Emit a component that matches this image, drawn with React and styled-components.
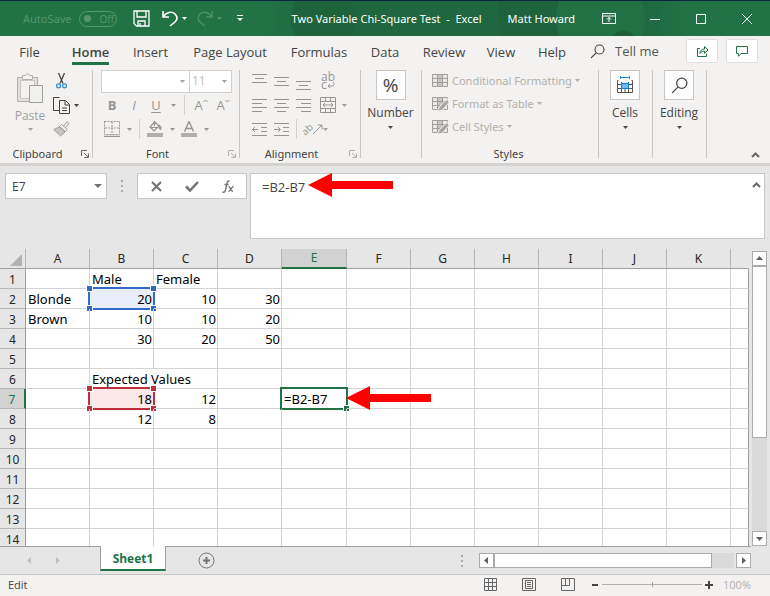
import React, { useState } from "react";
import styled, { createGlobalStyle } from "styled-components";

const GlobalStyle = createGlobalStyle`
  * {
    box-sizing: border-box;
  }

  body {
    margin: 0;
    background: #e6e6e6;
  }

  button,
  input,
  select,
  textarea {
    font: inherit;
    color: inherit;
    margin: 0;
    outline: none;
  }
`;

const Window = styled.div`
  display: flex;
  flex-direction: column;
  height: 100vh;
  overflow: hidden;
  background: #e6e6e6;
  color: #444;
  font-family: "Open Sans", "Noto Sans", sans-serif;
  font-size: 12px;
  line-height: 16px;
`;

const PlainButton = styled.button`
  display: flex;
  align-items: center;
  justify-content: center;
  padding: 0;
  border: none;
  background: none;
`;

/* ---------- title bar ---------- */

const TitleBar = styled.header`
  display: flex;
  align-items: center;
  flex: none;
  height: 36px;
  padding-left: 23px;
  border-top: 1px solid #0a2444;
  color: #fff;
  font-family: "Noto Sans", sans-serif;
  font-size: 11px;
  background:
    radial-gradient(circle at 81% 120%, #1b6039 12px, transparent 13px),
    radial-gradient(circle at 78% 50%, #227145 44px, transparent 45px),
    radial-gradient(circle at 42% 50%, #1d633c 32px, transparent 33px),
    radial-gradient(circle at 73% 30%, #1d633b 64px, transparent 65px),
    linear-gradient(90deg, #217346 34%, #1e673f 42%, #1e673f 82%, #217346 90%);
`;

const AutoSave = styled.label`
  display: flex;
  align-items: center;
  gap: 8px;
  color: #55966f;
`;

const Toggle = styled.span`
  display: flex;
  align-items: center;
  gap: 8px;
  width: 38px;
  height: 16px;
  padding-left: 4px;
  border: 1px solid #55966f;
  border-radius: 8px;
  font-size: 10px;

  input {
    appearance: none;
    width: 7px;
    height: 7px;
    border-radius: 50%;
    background: #55966f;
  }
`;

const QuickAccess = styled.div`
  display: flex;
  align-items: center;
  margin-left: 10px;
`;

const QuickButton = styled(PlainButton)`
  width: ${({ $width }) => $width}px;
  height: 24px;
  color: ${({ disabled }) => (disabled ? "#4a8e66" : "#fff")};
`;

const QuickMenuButton = styled(QuickButton)`
  justify-content: flex-end;
  padding-right: 4px;
`;

const DocTitle = styled.div`
  display: flex;
  flex: 1;
  justify-content: flex-end;
  gap: 26px;
  white-space: pre;
`;

const WindowButtons = styled.div`
  display: flex;
  margin-left: 11px;
`;

const WindowButton = styled(PlainButton)`
  width: 46px;
  height: 34px;
`;

/* ---------- ribbon ---------- */

const TabRow = styled.nav`
  display: flex;
  align-items: center;
  flex: none;
  height: 30px;
  padding-right: 12px;
  background: #f3f2f1;
  font-size: 13px;
`;

const RibbonTab = styled(PlainButton)`
  width: ${({ $width }) => $width}px;
  height: 30px;
  white-space: nowrap;

  span {
    height: 28px;
    padding-top: 7px;
    border-bottom: 3px solid ${({ $active }) => ($active ? "#217346" : "transparent")};
    font-weight: ${({ $active }) => ($active ? 600 : 400)};
  }
`;

const TellMe = styled.label`
  display: flex;
  align-items: center;
  flex: 1;
  gap: 10px;
  padding-left: 13px;

  input {
    width: 60px;
    padding: 0;
    border: none;
    background: none;
  }

  input::placeholder {
    color: #555;
    opacity: 1;
  }
`;

const ShareButtons = styled.div`
  display: flex;
  gap: 8px;
`;

const ShareButton = styled(PlainButton)`
  width: 32px;
  height: 24px;
  border: 1px solid #e1dfdd;
  border-radius: 2px;
  background: #fff;
  color: #217346;
`;

const Ribbon = styled.section`
  display: flex;
  flex: none;
  height: 100px;
  padding-top: 4px;
  border-bottom: 3px solid #d4d3d2;
  background: #f3f2f1;
`;

const Group = styled.div`
  display: flex;
  flex-direction: column;
  width: ${({ $width }) => $width}px;
  height: 88px;
  border-right: 1px solid #c8c6c4;
`;

const GroupBody = styled.div`
  display: flex;
  flex: 1;
  flex-direction: ${({ $column }) => ($column ? "column" : "row")};
  margin-top: -1px;
  padding-left: ${({ $pad = 0 }) => $pad}px;
`;

const GroupLabel = styled.div`
  display: flex;
  align-items: center;
  height: 16px;
  margin-bottom: -4px;
  padding-right: 3px;
  font-family: "Noto Sans", sans-serif;
  font-size: 11px;

  span {
    flex: 1;
    text-align: center;
  }

  svg {
    margin-left: 6px;
  }
`;

const ToolRow = styled.div`
  display: flex;
  align-items: center;
  height: 24px;
  color: #a19f9d;
`;

const Tool = styled(PlainButton)`
  width: ${({ $width = 22 }) => $width}px;
  height: 22px;
  color: ${({ $on }) => ($on ? "#444" : "#979593")};
  font-size: 13px;
  font-weight: ${({ $bold }) => ($bold ? 700 : 400)};
  font-style: ${({ $italic }) => ($italic ? "italic" : "normal")};
  text-decoration: ${({ $underline }) => ($underline ? "underline" : "none")};
  text-underline-offset: 2px;
`;

const Divider = styled.span`
  width: 1px;
  height: 20px;
  margin: 0 ${({ $gap = 6 }) => $gap}px;
  background: #d2d0ce;
`;

const PasteButton = styled(PlainButton)`
  flex-direction: column;
  justify-content: flex-start;
  width: 36px;
  gap: 4px;
  padding-top: 4px;
  color: #a19f9d;
`;

const ToolColumn = styled.div`
  display: flex;
  flex-direction: column;
`;

const ComboWrap = styled.span`
  display: grid;
  align-items: center;
  width: ${({ $width }) => $width}px;
  height: 23px;
  border: 1px solid #d2d0ce;
  background: #fff;

  & + & {
    margin-left: -1px;
  }

  select,
  svg {
    grid-area: 1 / 1;
  }

  svg {
    justify-self: end;
    margin-right: 4px;
    pointer-events: none;
  }

  select {
    appearance: none;
    width: 100%;
    padding: 0 2px;
    border: none;
    background: none;
  }
`;

const StyleButton = styled(PlainButton)`
  justify-content: flex-start;
  height: 23px;
  gap: 3px;
  color: #b1b0ae;
  font-family: "Noto Sans", sans-serif;
  font-size: 11px;
  white-space: nowrap;
`;

const BigButton = styled(PlainButton)`
  flex: 1;
  flex-direction: column;
  justify-content: flex-start;
  gap: 5px;
  padding: 1px 1px 0 0;
`;

const BigIcon = styled.span`
  display: flex;
  align-items: center;
  justify-content: center;
  width: 30px;
  height: 30px;
  border: 1px solid #c8c6c4;
  background: #fdfdfd;
  font-size: 19px;
`;

const CollapseButton = styled(PlainButton)`
  align-self: flex-end;
  width: 20px;
  height: 16px;
  margin: 0 5px 0 auto;
`;

/* ---------- formula bar ---------- */

const FormulaBar = styled.section`
  display: flex;
  align-items: flex-start;
  flex: none;
  padding: 7px 5px 10px;
`;

const NameBox = styled.div`
  display: flex;
  align-items: center;
  width: 102px;
  height: 26px;
  border: 1px solid #c6c6c6;
  background: #fff;

  input {
    flex: 1;
    min-width: 0;
    padding: 2px 0 0 6px;
    border: none;
    background: none;
  }
`;

const BarDots = styled.span`
  display: flex;
  justify-content: center;
  width: ${({ $width }) => $width}px;
  padding: ${({ $top = 0 }) => $top}px 0 0;
  margin-left: ${({ $end }) => ($end ? "auto" : 0)};
`;

const FormulaButtons = styled.div`
  display: flex;
  width: 110px;
  height: 26px;
  margin-right: 3px;
  border: 1px solid #c6c6c6;
  background: #fff;
`;

const FormulaButton = styled(PlainButton)`
  flex: 1;
  color: #737373;
`;

const FormulaField = styled.div`
  position: relative;
  display: flex;
  align-items: flex-start;
  flex: 1;
  height: 66px;
  border: 1px solid #c6c6c6;
  background: #fff;

  textarea {
    flex: 1;
    height: 60px;
    padding: 5px 0 0 11px;
    border: none;
    background: none;
    font-size: 13px;
    resize: none;
  }
`;

const ExpandButton = styled(PlainButton)`
  width: 16px;
  height: 22px;
`;

const FormulaArrow = styled.span`
  position: absolute;
  top: -1px;
  left: 57px;
  display: flex;
`;

/* ---------- sheet ---------- */

const SheetArea = styled.main`
  display: flex;
  flex: 1;
  min-height: 0;
`;

const GridPane = styled.div`
  flex: 1;
  min-width: 0;
  overflow: hidden;
`;

const Grid = styled.table`
  width: 100%;
  table-layout: fixed;
  border-collapse: separate;
  border-spacing: 0;
  background: #fff;
  color: #000;
  font-family: "Noto Sans", sans-serif;
  font-size: 13px;
`;

const ColHead = styled.th`
  width: ${({ $width }) => ($width ? `${$width}px` : "auto")};
  height: 20px;
  padding: 0;
  border-right: 1px solid #b5b5b5;
  border-bottom: ${({ $active }) => ($active ? "2px solid #217346" : "1px solid #9f9f9f")};
  background: ${({ $active }) => ($active ? "#d2d2d2" : "#e6e6e6")};
  color: ${({ $active }) => ($active ? "#217346" : "#262626")};
  font-size: 12px;
  font-weight: 400;
  line-height: 18px;

  &:last-child {
    border-right-color: #e6e6e6;
  }
`;

const Corner = styled(ColHead)`
  svg {
    display: block;
    margin: 2px 3px 0 auto;
  }
`;

const RowHead = styled.th`
  height: 20px;
  padding: 0;
  border-right: ${({ $active }) => ($active ? "2px solid #217346" : "1px solid #9f9f9f")};
  border-bottom: 1px solid #b5b5b5;
  background: ${({ $active }) => ($active ? "#d2d2d2" : "#e6e6e6")};
  color: ${({ $active }) => ($active ? "#217346" : "#262626")};
  font-size: 12px;
  font-weight: 400;
`;

const Cell = styled.td`
  position: relative;
  height: 20px;
  padding: 0 1px 0 2px;
  border-right: 1px solid #d4d4d4;
  border-bottom: 1px solid #d4d4d4;
  text-align: ${({ $number }) => ($number ? "right" : "left")};
  white-space: nowrap;

  &:last-child {
    border-right-color: #9f9f9f;
  }
`;

const RangeMark = styled.span`
  position: absolute;
  inset: -2px;
  border: 2px solid ${({ $color }) => $color};
  background: ${({ $fill }) => $fill};
`;

const Handle = styled.i`
  position: absolute;
  width: 5px;
  height: 5px;
  background: ${({ $color }) => $color};
  outline: 1px solid #fff;
  ${({ $v }) => $v}: -3px;
  ${({ $h }) => $h}: -3px;
`;

const CellText = styled.span`
  position: relative;
  display: block;
  height: 19px;
  line-height: 21px;
`;

const CellArrow = styled.span`
  position: absolute;
  top: -3px;
  left: 100%;
  z-index: 2;
  display: flex;
`;

const VScroll = styled.div`
  display: flex;
  flex-direction: column;
  flex: none;
  width: 21px;
  padding: 2px 3px 0;
`;

const ScrollButton = styled(PlainButton)`
  flex: none;
  width: 15px;
  height: 15px;
  border: 1px solid #ababab;
  background: #fff;
`;

const VTrack = styled.div`
  flex: 1;
  width: 15px;
  background: #dadada;
`;

const Thumb = styled.div`
  border: 1px solid #ababab;
  background: #fff;
`;

/* ---------- sheet tabs and status bar ---------- */

const SheetBar = styled.footer`
  display: flex;
  flex: none;
  height: 29px;
  padding-right: 19px;
  border-bottom: 1px solid #c6c6c6;
`;

const SheetNav = styled.div`
  display: flex;
  align-items: center;
  justify-content: center;
  gap: 20px;
  width: 100px;
  padding-right: 12px;
  border-top: 1px solid #9f9f9f;
`;

const SheetTab = styled(PlainButton)`
  width: 66px;
  height: 25px;
  padding-top: 3px;
  border: 1px solid #9f9f9f;
  border-top: none;
  border-bottom: 2px solid #217346;
  background: #fff;
  color: #217346;
  font-weight: 700;
`;

const SheetRest = styled.div`
  display: flex;
  align-items: center;
  flex: 1;
  padding-left: 32px;
  border-top: 1px solid #9f9f9f;
`;

const HScroll = styled.div`
  display: flex;
  width: 272px;
`;

const HTrack = styled.div`
  display: flex;
  flex: 1;
  margin-right: 2px;
  background: #dadada;
`;

const StatusBar = styled.div`
  display: flex;
  align-items: center;
  flex: none;
  height: 21px;
  padding: 0 19px 2px 8px;
  background: #f3f2f1;
  font-size: 11px;

  > span:first-child {
    flex: 1;
  }
`;

const ViewButtons = styled.div`
  display: flex;
  gap: 25px;
  margin-right: 16px;
`;

const ZoomSlider = styled.input`
  appearance: none;
  width: 100px;
  height: 9px;
  margin: 0 3px;
  background: linear-gradient(#b1b0ae, #b1b0ae) center / 100% 1px no-repeat;

  &::-webkit-slider-thumb {
    appearance: none;
    width: 1px;
    height: 5px;
    background: #a19f9d;
  }
`;

const ZoomLevel = styled.span`
  width: 38px;
  color: #b1b0ae;
  text-align: right;
`;

/* ---------- icons ---------- */

const Icon = ({ w = 16, h = 16, children, ...rest }) => (
  <svg
    width={w}
    height={h}
    viewBox={`0 0 ${w} ${h}`}
    fill="none"
    stroke="currentColor"
    aria-hidden="true"
    {...rest}
  >
    {children}
  </svg>
);

const Caret = ({ color = "currentColor" }) => (
  <Icon w={5} h={3} stroke="none">
    <path d="M0 0h5L2.5 3z" fill={color} />
  </Icon>
);

const Triangle = ({ d, color = "#606060" }) => (
  <Icon w={9} h={9} stroke="none">
    <path d={d} fill={color} />
  </Icon>
);

const Chevron = () => (
  <Icon w={9} h={6} strokeWidth="2" stroke="#666">
    <path d="M1 5l3.5-3.5L8 5" />
  </Icon>
);

const Dots = () => (
  <Icon w={3} h={12} stroke="none">
    <path d="M0 0h2v2H0zM0 5h2v2H0zM0 10h2v2H0z" fill="#ababab" />
  </Icon>
);

const RedArrow = () => (
  <Icon w={85} h={24} stroke="none">
    <path d="M0 12L24 0v8h61v8H24v8z" fill="#fe0000" />
  </Icon>
);

const Launcher = ({ on }) => (
  <Icon w={8} h={8} stroke={on ? "#666" : "#b1b0ae"}>
    <path d="M.5 6V.5H6M3 3l4 4M7.5 3.5v4h-4" />
  </Icon>
);

const SaveIcon = () => (
  <Icon w={17} h={17} strokeWidth="1.3">
    <path d="M1 1h15v15H3.5L1 13.5zM4 1v6h9V1M5 16v-5h7v5M7 16v-3" />
  </Icon>
);

const UndoIcon = ({ flip }) => (
  <Icon w={16} h={17} strokeWidth="1.6">
    <path
      d={
        flip
          ? "M15 1v6H9M15 7C12 2 6 1 3 4s-2 6 0 8l5 4"
          : "M1 1v6h6M1 7c3-5 9-6 12-3s2 6 0 8l-5 4"
      }
    />
  </Icon>
);

const CustomizeIcon = () => (
  <Icon w={6} h={7} stroke="none">
    <path d="M0 0h6v1H0zM0 3h6L3 6z" fill="currentColor" />
  </Icon>
);

const RibbonModeIcon = () => (
  <Icon w={14} h={11}>
    <path d="M.5.5h13v10H.5zM.5 3h13M7 9V4.5M5 6.5l2-2 2 2" />
  </Icon>
);

const SearchIcon = ({ size = 15 }) => (
  <svg
    width={size}
    height={size}
    viewBox="0 0 15 15"
    fill="none"
    stroke="currentColor"
    strokeWidth="1.1"
    aria-hidden="true"
  >
    <circle cx="9.5" cy="5.5" r="4.5" />
    <path d="M6.3 8.7L1 14" />
  </svg>
);

const ShareIcon = () => (
  <Icon w={13} h={13}>
    <path d="M4 3.5H1.5v8h9V8.5M4 8.5c0-3 2-4.5 4.5-4.5V1.5L12 5 8.5 8.3V6C6.5 6 5 6.8 4 8.5z" />
  </Icon>
);

const CommentIcon = () => (
  <Icon w={12} h={11}>
    <path d="M.5.5h11v7H5l-2.5 2.8V7.5h-2z" />
  </Icon>
);

const PasteIcon = () => (
  <Icon w={28} h={31} stroke="#b1b0ae">
    <path d="M1.5 4.5h20v24h-20z" fill="#e1dfdd" />
    <path d="M4.5 7.5h14v18h-14z" fill="#f3f2f1" stroke="#c8c6c4" />
    <path d="M6.5 6.5v-4h3C10 0 13 0 13.5 2.5h3v4z" fill="#f3f2f1" />
    <path d="M13.5 12.5h13v17h-13z" fill="#f0f0ef" stroke="#a19f9d" />
  </Icon>
);

const CutIcon = () => (
  <Icon w={11} h={16}>
    <path d="M2.5 0L7 10.5M8.5 0L4 10.5" stroke="#444" strokeWidth="1.3" />
    <circle cx="2.5" cy="12.8" r="2" stroke="#2b88d8" strokeWidth="1.2" />
    <circle cx="8.5" cy="12.8" r="2" stroke="#2b88d8" strokeWidth="1.2" />
  </Icon>
);

const CopyIcon = () => (
  <Icon w={17} h={17}>
    <path d="M6.5 13.5h-6V.5h6M6.5 3.5h6l4 4v9h-10zM12 4v4h4.5M9 11h5M9 13.5h5" />
  </Icon>
);

const PainterIcon = () => (
  <Icon w={17} h={16} stroke="#a19f9d">
    <path d="M10.500 5L14 .8l2 1.700-3.500 4" fill="#f3f2f1" />
    <path d="M8.500 3.500l6 5-2 2-6-5z" fill="#f3f2f1" />
    <path d="M6 6L.8 8.500l6.700 6.500L12 11z" fill="#c8c6c4" />
  </Icon>
);

const GrowMark = ({ down }) => (
  <Icon w={5} h={12}>
    <path d={down ? "M.5 1l2 2 2-2" : "M.5 3l2-2 2 2"} />
  </Icon>
);

const BordersIcon = () => (
  <Icon w={16} h={16}>
    <path d="M.5.5h15v13H.5zM8 1v13M1 7h15" strokeDasharray="2 1" />
    <path d="M0 15.5h16" strokeWidth="1.5" />
  </Icon>
);

const FillIcon = () => (
  <Icon w={16} h={16}>
    <path d="M7.5 0v5M7.5 1L3 6l4 4 5-5-4-4M3 6.5h8" strokeWidth="1.2" />
    <path d="M12 4c2 1 2.5 3 1.5 5-1-1-1.5-3-1.5-5z" fill="currentColor" />
    <path d="M0 12h16v4H0z" fill="#b1aeab" stroke="none" />
  </Icon>
);

const FontColorIcon = () => (
  <Icon w={16} h={16}>
    <path d="M3.5 10.5L8 .5l4.5 10M5 7.5h6" strokeWidth="1.4" />
    <path d="M0 12h16v4H0z" fill="#b1aeab" stroke="none" />
  </Icon>
);

const LinesIcon = ({ rows }) => (
  <Icon w={15} h={17}>
    <path d={rows} />
  </Icon>
);

const MergeIcon = () => (
  <Icon w={16} h={16}>
    <path d="M.5.5h15v15H.5zM.5 4.5h15M.5 11.5h15M5.5.5v4M10.5.5v4M5.5 11.5v4M10.5 11.5v4M3 8h10M5 6L3 8l2 2M11 6l2 2-2 2" />
  </Icon>
);

const WrapText = styled.span`
  font-size: 12px;
  line-height: 8px;
  text-align: left;
  white-space: pre;
`;

const TiltText = styled.span`
  font-size: 10px;
  line-height: 10px;
  transform: rotate(-45deg);
`;

const TableIcon = ({ brush }) => (
  <Icon w={17} h={16} stroke="#a19f9d">
    <path d="M.5 1.5h15v12H.5z" fill="#eceae9" />
    <path d="M5.5 1.5h5v12h-5z" fill="#c8c6c4" />
    <path d="M.5 5.5h15M.5 9.5h15M5.5 1v13M10.5 1v13" />
    {brush && (
      <path
        d="M15.5 3L8 10l-3 5.5 5.5-1.5 6.5-7.500z"
        fill="#a9a7a5"
        stroke="#f3f2f1"
      />
    )}
  </Icon>
);

const CellsIcon = () => (
  <Icon w={18} h={18} stroke="#555">
    <path d="M2.5 4.5h-1v12h15v-12h-1M1.5 8.5h15M1.5 12.5h15M5.5 6v10.5M12.5 6v10.5M9 12.5v4" />
    <path d="M5.5 7.5h7v5h-7z" fill="#6cb8f0" stroke="#1480d8" />
    <path d="M4 1.5h10M4.5 0v3M13.5 0v3" stroke="#2b88d8" />
  </Icon>
);

const GridViewIcon = () => (
  <Icon w={13} h={13} stroke="#666">
    <path d="M.5.5h12v12H.5zM4.5.5v12M8.5.5v12M.5 4.5h12M.5 8.5h12" />
  </Icon>
);

const PageViewIcon = () => (
  <Icon w={14} h={13} stroke="#666">
    <path d="M.5.5h13v12H.5zM3.5 2.5h7v8h-7zM5 4.5h4M5 6.5h4M5 8.5h4" />
  </Icon>
);

const BreakViewIcon = () => (
  <Icon w={14} h={13} stroke="#666">
    <path d="M.5.5h13v12H.5zM.5 7.5h8v-7M4.5.5v7" />
  </Icon>
);

const PlusCircleIcon = () => (
  <Icon w={17} h={17} stroke="#737373">
    <circle cx="8.5" cy="8.5" r="7.5" />
    <path d="M8.5 5v7M5 8.5h7" strokeWidth="2" />
  </Icon>
);

/* ---------- data ---------- */

const tabs = [
  { name: "File", width: 59 },
  { name: "Home", width: 63 },
  { name: "Insert", width: 57 },
  { name: "Page Layout", width: 102 },
  { name: "Formulas", width: 76 },
  { name: "Data", width: 56 },
  { name: "Review", width: 62 },
  { name: "View", width: 52 },
  { name: "Help", width: 50 },
];

const alignTop = [
  ["Top Align", "M0 1.5h15M3 5.5h9M0 9.5h15"],
  ["Middle Align", "M0 4.5h15M3 8.5h9M0 12.5h15"],
  ["Bottom Align", "M0 8.5h15M3 12.5h9M0 16.5h15"],
];

const alignSide = [
  ["Align Left", "M0 2.5h15M0 6.5h10M0 10.5h15M0 14.5h10"],
  ["Center", "M0 2.5h15M3 6.5h9M0 10.5h15M3 14.5h9"],
  ["Align Right", "M0 2.5h15M5 6.5h10M0 10.5h15M5 14.5h10"],
];

const indents = [
  ["Decrease Indent", "M0 2.5h15M9 6.5h6M9 10.5h6M0 14.5h15M0 8.5h6M3 6L.5 8.5 3 11"],
  ["Increase Indent", "M0 2.5h15M9 6.5h6M9 10.5h6M0 14.5h15M0 8.5h6M4 6l2.5 2.5L4 11"],
];

const columns = ["A", "B", "C", "D", "E", "F", "G", "H", "I", "J", "K"];
const rowNumbers = Array.from({ length: 14 }, (_, i) => i + 1);

const values = {
  B1: "Male",
  C1: "Female",
  A2: "Blonde",
  B2: 20,
  C2: 10,
  D2: 30,
  A3: "Brown",
  B3: 10,
  C3: 10,
  D3: 20,
  B4: 30,
  C4: 20,
  D4: 50,
  B6: "Expected Values",
  B7: 18,
  C7: 12,
  B8: 12,
  C8: 8,
};

const ranges = {
  B2: { color: "#3169c6", fill: "#e8eef9" },
  B7: { color: "#be2f3c", fill: "#fbe9ea" },
};

const corners = [
  ["top", "left"],
  ["top", "right"],
  ["bottom", "left"],
  ["bottom", "right"],
];

const active = "E7";

const SheetCell = ({ id, formula }) => {
  const range = ranges[id];
  const isActive = id === active;
  const value = isActive ? formula : values[id];

  return (
    <Cell $number={typeof value === "number"} colSpan={id === "B6" ? 2 : 1}>
      {range && (
        <RangeMark $color={range.color} $fill={range.fill}>
          {corners.map(([v, h]) => (
            <Handle key={v + h} $v={v} $h={h} $color={range.color} />
          ))}
        </RangeMark>
      )}
      {isActive && (
        <RangeMark $color="#217346" $fill="#fff">
          <Handle $v="bottom" $h="right" $color="#217346" />
        </RangeMark>
      )}
      <CellText>{value}</CellText>
      {isActive && (
        <CellArrow>
          <RedArrow />
        </CellArrow>
      )}
    </Cell>
  );
};

const RibbonGroup = ({ label, width, pad, column, launcher, children }) => (
  <Group $width={width}>
    <GroupBody $column={column} $pad={pad}>
      {children}
    </GroupBody>
    {label && (
      <GroupLabel>
        <span>{label}</span>
        {launcher && <Launcher on={launcher === "on"} />}
      </GroupLabel>
    )}
  </Group>
);

const App = () => {
  const [tab, setTab] = useState("Home");
  const [formula, setFormula] = useState("=B2-B7");
  const [zoom, setZoom] = useState(100);

  return (
    <>
      <GlobalStyle />
      <Window>
        <TitleBar>
          <AutoSave>
            AutoSave
            <Toggle>
              <input type="checkbox" disabled />
              Off
            </Toggle>
          </AutoSave>
          <QuickAccess>
            <QuickButton $width={28} aria-label="Save">
              <SaveIcon />
            </QuickButton>
            <QuickMenuButton $width={27} aria-label="Undo">
              <UndoIcon />
            </QuickMenuButton>
            <Caret />
            <QuickMenuButton $width={30} aria-label="Redo" disabled>
              <UndoIcon flip />
            </QuickMenuButton>
            <Caret color="#55966f" />
            <QuickButton $width={36} aria-label="Customize Quick Access Toolbar">
              <CustomizeIcon />
            </QuickButton>
          </QuickAccess>
          <DocTitle>
            <span>{"Two Variable Chi-Square Test  -  Excel"}</span>
            <span>Matt Howard</span>
          </DocTitle>
          <WindowButtons>
            <WindowButton aria-label="Ribbon Display Options">
              <RibbonModeIcon />
            </WindowButton>
            <WindowButton aria-label="Minimize">
              <Icon w={10} h={10}>
                <path d="M0 5.5h10" />
              </Icon>
            </WindowButton>
            <WindowButton aria-label="Maximize">
              <Icon w={10} h={10}>
                <path d="M.5.5h9v9h-9z" />
              </Icon>
            </WindowButton>
            <WindowButton aria-label="Close">
              <Icon w={10} h={10}>
                <path d="M0 0l10 10M10 0L0 10" />
              </Icon>
            </WindowButton>
          </WindowButtons>
        </TitleBar>

        <TabRow>
          {tabs.map(({ name, width }) => (
            <RibbonTab
              key={name}
              $width={width}
              $active={tab === name}
              onClick={() => setTab(name)}
            >
              <span>{name}</span>
            </RibbonTab>
          ))}
          <TellMe>
            <SearchIcon />
            <input type="text" placeholder="Tell me" aria-label="Tell me" />
          </TellMe>
          <ShareButtons>
            <ShareButton aria-label="Share">
              <ShareIcon />
            </ShareButton>
            <ShareButton aria-label="Comments">
              <CommentIcon />
            </ShareButton>
          </ShareButtons>
        </TabRow>

        <Ribbon>
          <RibbonGroup label="Clipboard" width={93} pad={12} launcher="on">
            <PasteButton disabled>
              <PasteIcon />
              Paste
              <Caret />
            </PasteButton>
            <ToolColumn>
              <ToolRow>
                <Tool $width={26} $on aria-label="Cut">
                  <CutIcon />
                </Tool>
              </ToolRow>
              <ToolRow>
                <Tool $width={26} $on aria-label="Copy">
                  <CopyIcon />
                </Tool>
                <Caret color="#444" />
              </ToolRow>
              <ToolRow>
                <Tool $width={26} aria-label="Format Painter">
                  <PainterIcon />
                </Tool>
              </ToolRow>
            </ToolColumn>
          </RibbonGroup>

          <RibbonGroup label="Font" width={147} pad={8} column launcher="off">
            <ToolRow>
              <ComboWrap $width={89}>
                <select aria-label="Font" disabled>
                  <option></option>
                </select>
                <Caret />
              </ComboWrap>
              <ComboWrap $width={43}>
                <select aria-label="Font Size" disabled>
                  <option>11</option>
                </select>
                <Caret />
              </ComboWrap>
            </ToolRow>
            <ToolRow>
              <Tool $bold>B</Tool>
              <Tool $italic>I</Tool>
              <Tool $underline>U</Tool>
              <Tool $width={12} aria-label="Underline style">
                <Caret />
              </Tool>
              <Divider $gap={5} />
              <Tool aria-label="Increase Font Size">
                A<GrowMark />
              </Tool>
              <Tool aria-label="Decrease Font Size">
                A<GrowMark down />
              </Tool>
            </ToolRow>
            <ToolRow>
              <Tool aria-label="Borders">
                <BordersIcon />
              </Tool>
              <Tool $width={12} aria-label="Border style">
                <Caret />
              </Tool>
              <Divider $gap={4} />
              <Tool aria-label="Fill Color">
                <FillIcon />
              </Tool>
              <Tool $width={12} aria-label="Fill options">
                <Caret />
              </Tool>
              <Tool aria-label="Font Color">
                <FontColorIcon />
              </Tool>
              <Tool $width={12} aria-label="Font color options">
                <Caret />
              </Tool>
            </ToolRow>
          </RibbonGroup>

          <RibbonGroup label="Alignment" width={121} pad={8} column launcher="off">
            <ToolRow>
              {alignTop.map(([label, rows]) => (
                <Tool key={label} aria-label={label}>
                  <LinesIcon rows={rows} />
                </Tool>
              ))}
              <Tool $width={28} aria-label="Wrap Text">
                <WrapText>
                  {"ab\nc"}
                  <Icon w={8} h={7}>
                    <path d="M3 2L1 4l2 2M1 4h4c2 0 2.5-2 1.5-4" />
                  </Icon>
                </WrapText>
              </Tool>
            </ToolRow>
            <ToolRow>
              {alignSide.map(([label, rows]) => (
                <Tool key={label} aria-label={label}>
                  <LinesIcon rows={rows} />
                </Tool>
              ))}
              <Tool $width={28} aria-label="Merge">
                <MergeIcon />
              </Tool>
              <Caret />
            </ToolRow>
            <ToolRow>
              {indents.map(([label, rows]) => (
                <Tool key={label} aria-label={label}>
                  <LinesIcon rows={rows} />
                </Tool>
              ))}
              <Divider $gap={4} />
              <Tool aria-label="Orientation">
                <TiltText>ab</TiltText>
                <Icon w={10} h={12}>
                  <path d="M0 11l9-9M4.5 2H9v4.5" />
                </Icon>
              </Tool>
              <Caret />
            </ToolRow>
          </RibbonGroup>

          <RibbonGroup width={61}>
            <BigButton>
              <BigIcon>%</BigIcon>
              Number
              <Caret color="#444" />
            </BigButton>
          </RibbonGroup>

          <RibbonGroup label="Styles" width={177} pad={10} column>
            <StyleButton disabled>
              <TableIcon />
              Conditional Formatting
              <Caret />
            </StyleButton>
            <StyleButton disabled>
              <TableIcon brush />
              Format as Table
              <Caret />
            </StyleButton>
            <StyleButton disabled>
              <TableIcon brush />
              Cell Styles
              <Caret />
            </StyleButton>
          </RibbonGroup>

          <RibbonGroup width={54}>
            <BigButton>
              <BigIcon>
                <CellsIcon />
              </BigIcon>
              Cells
              <Caret color="#444" />
            </BigButton>
          </RibbonGroup>

          <RibbonGroup width={54}>
            <BigButton>
              <BigIcon>
                <SearchIcon size={17} />
              </BigIcon>
              Editing
              <Caret color="#444" />
            </BigButton>
          </RibbonGroup>

          <CollapseButton aria-label="Collapse the Ribbon">
            <Chevron />
          </CollapseButton>
        </Ribbon>

        <FormulaBar>
          <NameBox>
            <input type="text" aria-label="Name Box" defaultValue={active} />
            <ExpandButton aria-label="Open names">
              <Triangle d="M0 2h8L4 6z" color="#737373" />
            </ExpandButton>
          </NameBox>
          <BarDots $width={30} $top={7}>
            <Dots />
          </BarDots>
          <FormulaButtons>
            <FormulaButton aria-label="Cancel">
              <Icon w={11} h={11} strokeWidth="2">
                <path d="M1 1l9 9M10 1l-9 9" />
              </Icon>
            </FormulaButton>
            <FormulaButton aria-label="Enter">
              <Icon w={14} h={11} strokeWidth="2.5">
                <path d="M1 5.5L5 9.5 13 1" />
              </Icon>
            </FormulaButton>
            <FormulaButton aria-label="Insert Function">
              <Icon w={12} h={13} strokeWidth="1.4">
                <path d="M7.5 1C5 .5 5 3 4 8s-2 4.5-3.5 4M2.5 4.5h4M6.5 6.5c2 0 2 5 4.5 5M11.5 6.5c-2 0-3 5-5 5" />
              </Icon>
            </FormulaButton>
          </FormulaButtons>
          <FormulaField>
            <textarea
              aria-label="Formula"
              spellCheck={false}
              value={formula}
              onChange={(e) => setFormula(e.target.value)}
            />
            <ExpandButton aria-label="Collapse Formula Bar">
              <Chevron />
            </ExpandButton>
            <FormulaArrow>
              <RedArrow />
            </FormulaArrow>
          </FormulaField>
        </FormulaBar>

        <SheetArea>
          <GridPane>
            <Grid>
              <thead>
                <tr>
                  <Corner $width={26} aria-label="Select All">
                    <Icon w={12} h={12} stroke="none">
                      <path d="M12 0v12H0z" fill="#b1b1b1" />
                    </Icon>
                  </Corner>
                  {columns.map((col) => (
                    <ColHead
                      key={col}
                      $width={col === active[0] ? 65 : 64}
                      $active={col === active[0]}
                    >
                      {col}
                    </ColHead>
                  ))}
                  <ColHead />
                </tr>
              </thead>
              <tbody>
                {rowNumbers.map((row) => (
                  <tr key={row}>
                    <RowHead $active={row === Number(active[1])}>
                      <CellText>{row}</CellText>
                    </RowHead>
                    {columns
                      .filter((col) => col + row !== "C6")
                      .map((col) => (
                        <SheetCell key={col} id={col + row} formula={formula} />
                      ))}
                    <Cell />
                  </tr>
                ))}
              </tbody>
            </Grid>
          </GridPane>
          <VScroll>
            <ScrollButton aria-label="Scroll up">
              <Triangle d="M1 6h7L4.5 2z" />
            </ScrollButton>
            <VTrack>
              <Thumb style={{ height: "65%" }} />
            </VTrack>
            <ScrollButton aria-label="Scroll down">
              <Triangle d="M1 3h7L4.5 7z" />
            </ScrollButton>
          </VScroll>
        </SheetArea>

        <SheetBar>
          <SheetNav>
            <Triangle d="M6 1v7L2 4.5z" color="#c0c0c0" />
            <Triangle d="M2 1v7l4-3.5z" color="#c0c0c0" />
          </SheetNav>
          <SheetTab>Sheet1</SheetTab>
          <SheetRest>
            <PlainButton aria-label="New sheet">
              <PlusCircleIcon />
            </PlainButton>
            <BarDots $width={34} $end>
              <Dots />
            </BarDots>
            <HScroll>
              <ScrollButton aria-label="Scroll left">
                <Triangle d="M6 1v7L2 4.5z" />
              </ScrollButton>
              <HTrack>
                <Thumb style={{ width: "91%" }} />
              </HTrack>
              <ScrollButton aria-label="Scroll right">
                <Triangle d="M3 1v7l4-3.5z" />
              </ScrollButton>
            </HScroll>
          </SheetRest>
        </SheetBar>

        <StatusBar>
          <span>Edit</span>
          <ViewButtons>
            <PlainButton aria-label="Normal">
              <GridViewIcon />
            </PlainButton>
            <PlainButton aria-label="Page Layout view">
              <PageViewIcon />
            </PlainButton>
            <PlainButton aria-label="Page Break Preview">
              <BreakViewIcon />
            </PlainButton>
          </ViewButtons>
          <PlainButton aria-label="Zoom out" onClick={() => setZoom(zoom - 10)}>
            <Icon w={8} h={8} strokeWidth="2">
              <path d="M1 4h6" />
            </Icon>
          </PlainButton>
          <ZoomSlider
            type="range"
            aria-label="Zoom"
            min="0"
            max="200"
            value={zoom}
            onChange={(e) => setZoom(Number(e.target.value))}
          />
          <PlainButton aria-label="Zoom in" onClick={() => setZoom(zoom + 10)}>
            <Icon w={8} h={8} strokeWidth="2">
              <path d="M0 4h8M4 0v8" />
            </Icon>
          </PlainButton>
          <ZoomLevel>{zoom}%</ZoomLevel>
        </StatusBar>
      </Window>
    </>
  );
};

export default App;
